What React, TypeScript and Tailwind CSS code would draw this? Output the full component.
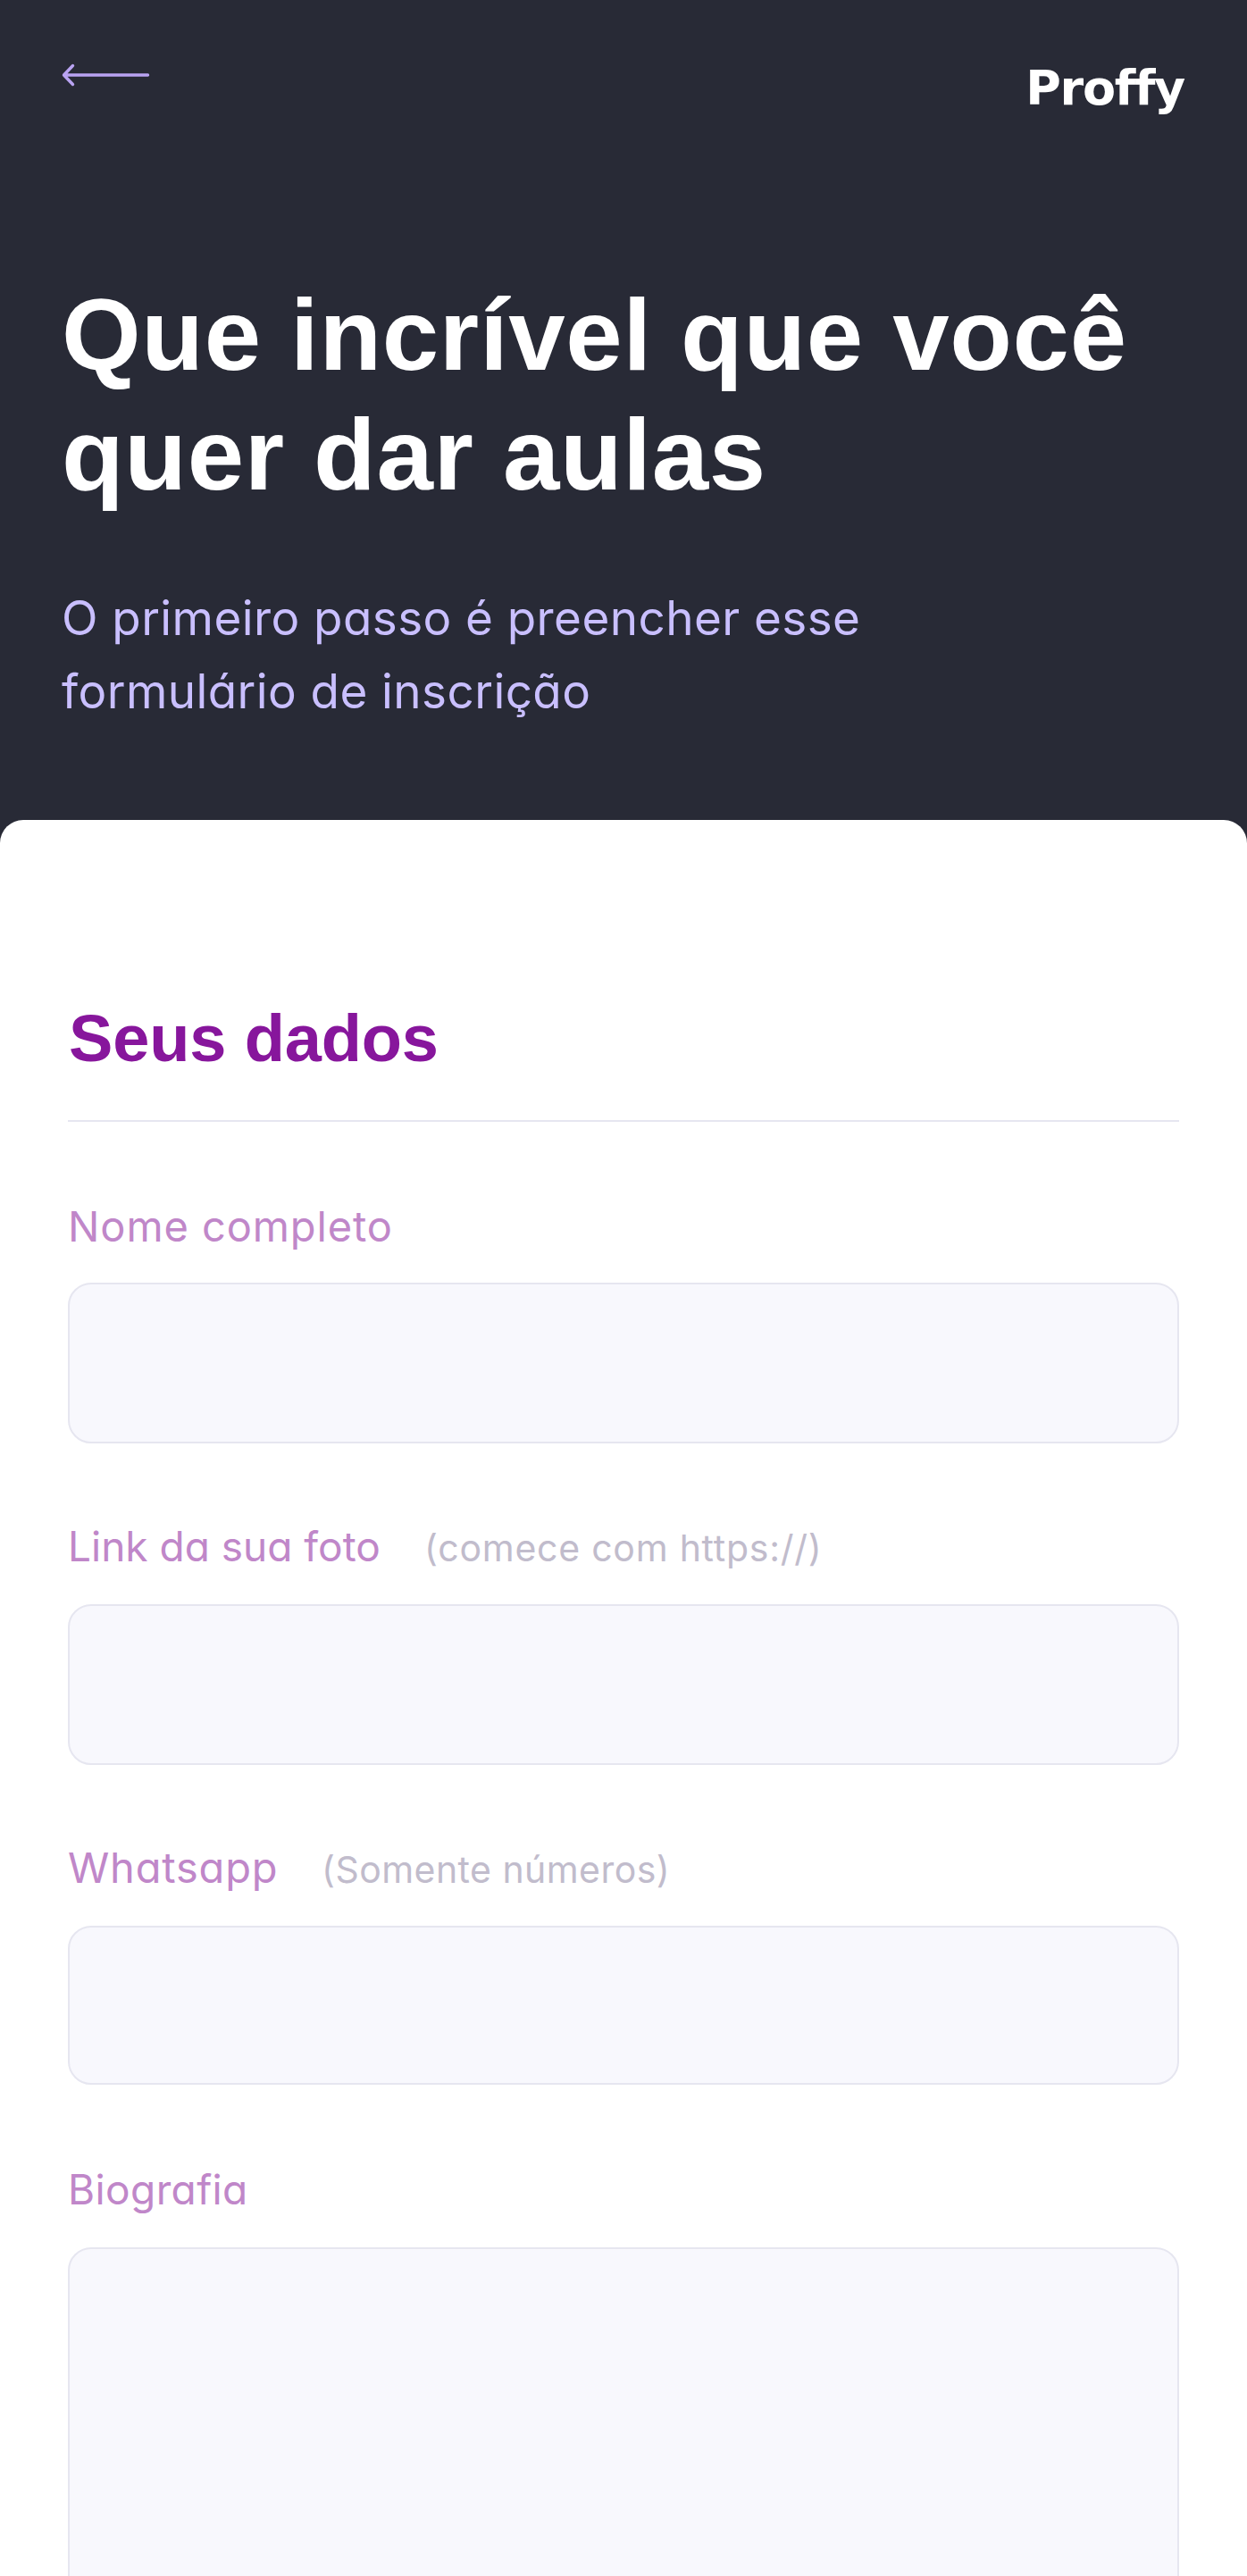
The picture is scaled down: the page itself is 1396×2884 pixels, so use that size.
type Field = {
  id: string;
  label: string;
  labelClass: string;
  hint?: string;
  hintClass?: string;
  wrapClass: string;
  boxClass: string;
};

const fields: Field[] = [
  {
    id: 'name',
    label: 'Nome completo',
    labelClass: 'text-[47px] tracking-[0.9px]',
    wrapClass: 'mt-[87px] gap-[33px]',
    boxClass: 'h-[180px]',
  },
  {
    id: 'avatar',
    label: 'Link da sua foto',
    labelClass: 'w-[399px] text-[46px] tracking-[0px]',
    hint: '(comece com https://)',
    hintClass: 'tracking-[0.75px]',
    wrapClass: 'mt-[85px] gap-[35px]',
    boxClass: 'h-[180px]',
  },
  {
    id: 'whatsapp',
    label: 'Whatsapp',
    labelClass: 'w-[284px] text-[47px] tracking-[0.8px]',
    hint: '(Somente números)',
    hintClass: 'tracking-[0.45px]',
    wrapClass: 'mt-[85px] gap-[35px]',
    boxClass: 'h-[178px]',
  },
];

const inter = "font-['Inter',sans-serif] [font-feature-settings:'cv11']";
const labelBase = 'shrink-0 whitespace-nowrap leading-[60px] text-[#c087c9]';
const boxBase =
  'block w-full resize-none rounded-[26px] border-2 border-[#e6e6f0] bg-[#f8f8fd] px-8 outline-none';

function BackArrow() {
  return (
    <svg width="100" height="28" viewBox="0 0 100 28" fill="none" aria-label="Voltar">
      <path
        d="M96.5 14H3M12.5 3.5L2.5 14L12.5 24.5"
        stroke="#b9a3f2"
        strokeWidth="3.4"
        strokeLinecap="round"
        strokeLinejoin="round"
      />
    </svg>
  );
}

export default function App() {
  return (
    <div className={`h-[2884px] w-full overflow-hidden bg-[#282a36] ${inter}`}>
      <header className="flex h-[918px] flex-col pl-[69px] pr-[70px] pt-[69px]">
        <div className="flex items-start justify-between">
          <a href="#" className="mt-px">
            <BackArrow />
          </a>
          <span className="font-['DejaVu_Sans',sans-serif] text-[54px] leading-[60px] font-bold tracking-[-1.3px] text-white">
            Proffy
          </span>
        </div>
        <h1 className="mt-[179px] font-['Liberation_Sans',sans-serif] text-[114px] leading-[134px] font-bold tracking-[0.68px] whitespace-nowrap text-white">
          Que incrível que você
          <br />
          quer dar aulas
        </h1>
        <p className="mt-[75px] text-[53px] leading-[82px] tracking-[0.42px] whitespace-nowrap text-[#c9bfff]">
          O primeiro passo é preencher esse
          <br />
          formulário de inscrição
        </p>
      </header>

      <main className="h-[2200px] rounded-t-[26px] bg-white px-[76px] pt-[208px]">
        <h2 className="border-b-2 border-[#e6e6f0] pb-[54px] pl-px font-['Liberation_Sans',sans-serif] text-[74px] leading-[74px] font-bold tracking-[-0.15px] text-[#87169c]">
          Seus dados
        </h2>
        <form>
          {fields.map((f) => (
            <div key={f.id} className={`flex flex-col ${f.wrapClass}`}>
              <div className="flex h-[60px] items-baseline">
                <label htmlFor={f.id} className={`${labelBase} ${f.labelClass}`}>
                  {f.label}
                </label>
                {f.hint && (
                  <span className={`text-[41px] leading-[50px] whitespace-nowrap text-[#c1bccc] ${f.hintClass}`}>
                    {f.hint}
                  </span>
                )}
              </div>
              <input id={f.id} className={`${boxBase} ${f.boxClass}`} />
            </div>
          ))}
          <div className="mt-[87px] flex flex-col gap-[35px]">
            <label htmlFor="bio" className={`${labelBase} text-[46px] tracking-[0.4px]`}>
              Biografia
            </label>
            <textarea id="bio" className={`${boxBase} h-[600px]`} />
          </div>
        </form>
      </main>
    </div>
  );
}
